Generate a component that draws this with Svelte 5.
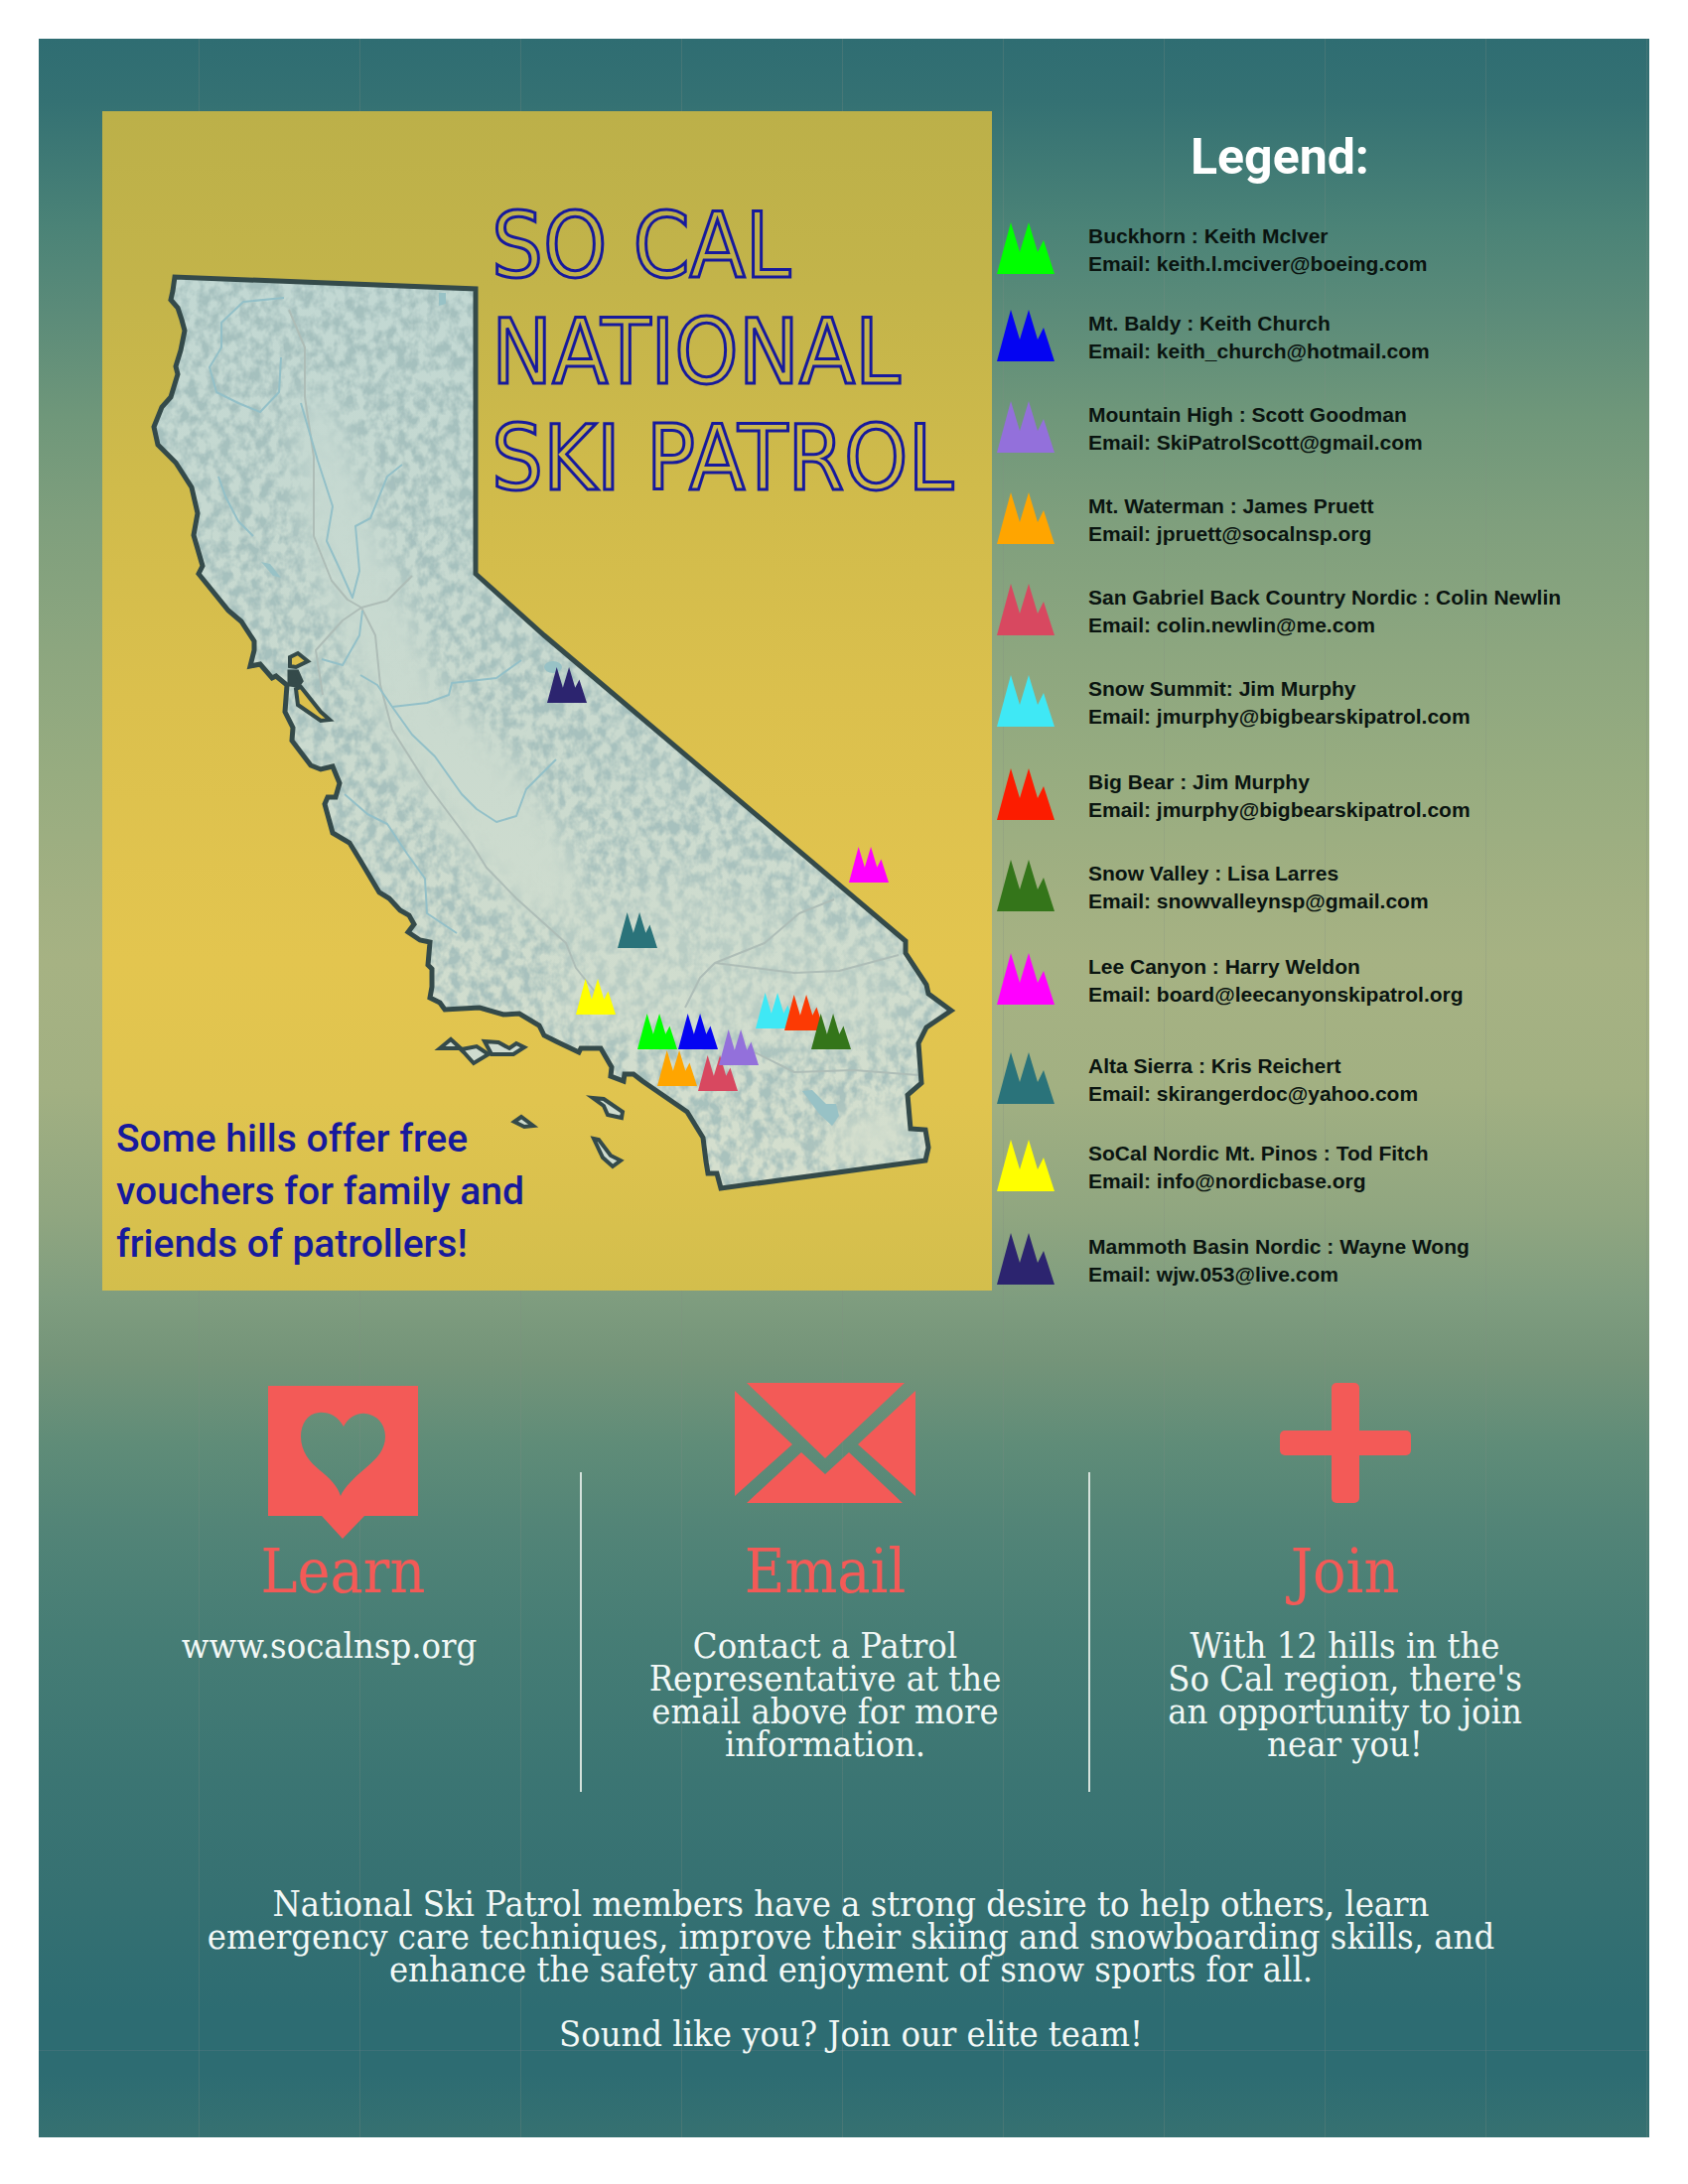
<script>
  const peak = 'M0 52 L14 0 L23 30 L32 0 L41 30 L47 18 L58 52 Z';

  const hills = [
    { name: 'Buckhorn : Keith McIver', email: 'keith.l.mciver@boeing.com', color: '#00ff00' },
    { name: 'Mt. Baldy : Keith Church', email: 'keith_church@hotmail.com', color: '#0404f2' },
    { name: 'Mountain High : Scott Goodman', email: 'SkiPatrolScott@gmail.com', color: '#9370db' },
    { name: 'Mt. Waterman : James Pruett', email: 'jpruett@socalnsp.org', color: '#ffa500' },
    { name: 'San Gabriel Back Country Nordic : Colin Newlin', email: 'colin.newlin@me.com', color: '#d84860' },
    { name: 'Snow Summit: Jim Murphy', email: 'jmurphy@bigbearskipatrol.com', color: '#3fe8f5' },
    { name: 'Big Bear : Jim Murphy', email: 'jmurphy@bigbearskipatrol.com', color: '#fc1c00' },
    { name: 'Snow Valley : Lisa Larres', email: 'snowvalleynsp@gmail.com', color: '#34751a' },
    { name: 'Lee Canyon : Harry Weldon', email: 'board@leecanyonskipatrol.org', color: '#ff00ff' },
    { name: 'Alta Sierra : Kris Reichert', email: 'skirangerdoc@yahoo.com', color: '#2a737a' },
    { name: 'SoCal Nordic Mt. Pinos : Tod Fitch', email: 'info@nordicbase.org', color: '#ffff00' },
    { name: 'Mammoth Basin Nordic : Wayne Wong', email: 'wjw.053@live.com', color: '#2c246f' }
  ];

  // Marker positions on the map: left edge and base line of each peak.
  const markers = [
    { x: 551, y: 708, color: '#2c246f' },
    { x: 855, y: 889, color: '#ff00ff' },
    { x: 622, y: 955, color: '#2a737a' },
    { x: 580, y: 1022, color: '#ffff00' },
    { x: 642, y: 1057, color: '#00ff00' },
    { x: 683, y: 1057, color: '#0404f2' },
    { x: 662, y: 1094, color: '#ffa500' },
    { x: 703, y: 1099, color: '#d84860' },
    { x: 724, y: 1073, color: '#9370db' },
    { x: 761, y: 1036, color: '#3fe8f5' },
    { x: 790, y: 1038, color: '#fc3a04' },
    { x: 817, y: 1057, color: '#34751a' }
  ];

  const state =
    'M176 279 L174 293 L172 302 L179 310 L183 322 L186 333 L182 353 L177 369 L179 377 L172 400 L163 410 L155 430 L159 448 L177 466 L193 491 L199 517 L195 539 L204 570 L200 578 L230 615 L243 626 L256 646 L256 655 L252 671 L262 669 L274 683 L278 681 L289 690 L287 717 L295 733 L294 746 L313 771 L323 775 L335 772 L342 789 L338 803 L330 803 L327 810 L335 839 L352 849 L363 867 L382 899 L392 905 L403 917 L412 922 L417 931 L411 939 L423 947 L433 949 L431 972 L435 976 L435 994 L433 1005 L443 1010 L448 1017 L483 1015 L507 1022 L523 1021 L543 1033 L548 1043 L560 1049 L583 1060 L585 1056 L605 1056 L616 1075 L615 1084 L628 1089 L629 1082 L638 1082 L647 1089 L692 1120 L708 1146 L711 1170 L713 1182 L722 1182 L726 1197 L932 1169 L935 1156 L932 1138 L917 1137 L914 1103 L928 1091 L925 1051 L933 1035 L958 1018 L935 1001 L933 992 L912 960 L912 948 L548 640 L479 578 L479 291 Z';

  const islands = [
    'M443 1056 L454 1047 L465 1057 L480 1054 L492 1062 L477 1071 L467 1060 L463 1056 Z',
    'M488 1049 L502 1050 L513 1056 L520 1051 L528 1055 L517 1062 L495 1062 Z',
    'M597 1106 L608 1107 L627 1120 L626 1126 L612 1123 L608 1114 Z',
    'M518 1130 L525 1125 L537 1134 L528 1135 Z',
    'M598 1147 L603 1148 L615 1164 L625 1169 L617 1175 L607 1166 Z'
  ];
</script>

<main class="poster">
  <div class="top">
    <section class="panel">
      <svg class="map" viewBox="103 112 896 1188" role="img" aria-label="Map of California with ski hills">
        <defs>
          <linearGradient id="land" x1="0" y1="0" x2="0" y2="1">
            <stop offset="0" stop-color="#c2d8d3" />
            <stop offset="0.5" stop-color="#cadacf" />
            <stop offset="1" stop-color="#d5dfce" />
          </linearGradient>
          <filter id="relief" x="0" y="0" width="1" height="1" color-interpolation-filters="sRGB">
            <feTurbulence type="fractalNoise" baseFrequency="0.095 0.075" numOctaves="3" seed="8" />
            <feColorMatrix values="0 0 0 0 0.62  0 0 0 0 0.73  0 0 0 0 0.725  3 0 0 0 -1.1" />
          </filter>
          <filter id="soft"><feGaussianBlur stdDeviation="14" /></filter>
          <clipPath id="inside"><path d={state} /></clipPath>
          <mask id="hilly" maskUnits="userSpaceOnUse" x="103" y="112" width="896" height="1188">
            <rect x="103" y="112" width="896" height="1188" fill="#ccc" />
            <g filter="url(#soft)">
              <path d="M298 400 L330 400 L390 560 L440 690 L520 770 L575 860 L590 920 L540 930 L470 860 L400 760 L345 640 L305 520 Z" fill="#000" />
              <path d="M600 940 L690 930 L700 960 L650 1000 L590 990 Z" fill="#000" />
              <path d="M850 1130 L905 1110 L915 1160 L830 1168 Z" fill="#000" />
              <path d="M560 920 L700 880 L900 960 L900 1060 L560 1040 Z" fill="#777" />
            </g>
          </mask>
        </defs>

        <path d={state} fill="url(#land)" />
        <g clip-path="url(#inside)">
          <g mask="url(#hilly)">
            <rect x="103" y="260" width="896" height="960" filter="url(#relief)" />
          </g>
          <g class="road">
            <path d="M291 312 L307 350 L307 400 L316 460 L316 540 L334 585 L350 604 L364 612 L378 640 L383 690 L395 735 L430 790 L475 850 L490 874 L520 905 L570 950 L580 975 L600 1000" />
            <path d="M364 612 L345 625 L318 655 L325 700 M364 612 L390 605 L415 580" />
            <path d="M690 1015 L705 985 L720 970 L770 950 L805 920 L840 906 M720 970 L800 980 L845 978 L905 962 M760 1060 L800 1080 L860 1078 L925 1083" />
          </g>
          <g class="river">
            <path d="M286 300 L245 304 L223 325 L223 350 L211 370 L218 395 L240 406 L262 415 L281 395 L283 360" />
            <path d="M303 406 L320 464 L335 510 L329 545 L343 575 L355 602 L362 575 L358 530 L373 522 L390 480 L405 468" />
            <path d="M220 480 L227 500 L240 525 L255 540" />
            <path d="M324 664 L345 670 L362 640 L365 615 M363 680 L380 690 L395 712 L415 740 L438 762 L465 800 L480 815 L500 828 L520 822 L530 795 L545 780 L560 765" />
            <path d="M395 712 L430 708 L452 700 L455 688 L500 683 L525 665" />
            <path d="M347 800 L370 820 L390 830 L410 860 L428 885 L430 920 L460 940" />
          </g>
          <path class="lake" d="M808 1099 L818 1098 L832 1112 L842 1112 L845 1124 L838 1134 L825 1122 Z" />
          <ellipse class="lake" cx="557" cy="672" rx="9" ry="6" />
          <path class="lake" d="M442 295 L449 295 L449 306 L442 308 Z M263 566 L272 568 L283 582 L275 580 Z" />
        </g>
        <path class="border" d={state} />
        <path class="bay" d="M292 662 L300 658 L310 666 L298 672 L292 671 Z" />
        <path class="bay" d="M298 694 L303 692 L323 717 L332 725 L323 726 L300 710 Z" />
        <path class="strait" d="M292 677 L299 677 L303 686 L300 690 L292 689 Z" />
        {#each islands as island}
          <path class="island" d={island} />
        {/each}
        {#each markers as m}
          <path d={peak} fill={m.color} transform="translate({m.x} {m.y - 36}) scale(0.69)" />
        {/each}
      </svg>
      <h1>SO CAL<br />NATIONAL<br />SKI PATROL</h1>
      <p class="slogan">Some hills offer free<br />vouchers for family and<br />friends of patrollers!</p>
    </section>

    <section class="legend">
      <h2>Legend:</h2>
      <ul>
        {#each hills as hill}
          <li>
            <svg class="peak" viewBox="0 0 58 52" aria-hidden="true"><path d={peak} fill={hill.color} /></svg>
            <p>{hill.name}<br />Email: <a href="mailto:{hill.email}">{hill.email}</a></p>
          </li>
        {/each}
      </ul>
    </section>
  </div>

  <section class="actions">
    <article class="learn">
      <svg width="151" height="154" viewBox="0 0 151 154" aria-hidden="true">
        <path fill-rule="evenodd" d="M0 0 H151 V131 H97 L75 154 L54 131 H0 Z M76 41 C70 30 60 26 51 27 C40 28 33 38 33 51 C33 66 42 77 52 85 C62 93 70 101 73 111 C77 102 86 93 98 83 C110 73 118 64 118 51 C118 38 109 29 98 28 C89 27 81 32 76 41 Z" />
      </svg>
      <h3>Learn</h3>
      <p><a href="http://www.socalnsp.org">www.socalnsp.org</a></p>
    </article>
    <div class="rule"></div>
    <article class="email">
      <svg width="182" height="121" viewBox="0 0 182 121" aria-hidden="true">
        <path d="M12 0 H171 L91 76 Z M0 8 L58 62 L0 114 Z M182 8 L124 62 L182 114 Z M12 121 L67 70 L91 92 L115 70 L169 121 Z" />
      </svg>
      <h3>Email</h3>
      <p>Contact a Patrol<br />Representative at the<br />email above for more<br />information.</p>
    </article>
    <div class="rule"></div>
    <article class="join">
      <svg width="132" height="121" viewBox="0 0 132 121" aria-hidden="true">
        <rect x="52" y="0" width="28" height="121" rx="5" />
        <rect x="0" y="48" width="132" height="25" rx="5" />
      </svg>
      <h3>Join</h3>
      <p>With 12 hills in the<br />So Cal region, there's<br />an opportunity to join<br />near you!</p>
    </article>
  </section>

  <footer>
    <p>National Ski Patrol members have a strong desire to help others, learn<br />emergency care techniques, improve their skiing and snowboarding skills, and<br />enhance the safety and enjoyment of snow sports for all.</p>
    <p>Sound like you? Join our elite team!</p>
  </footer>
</main>

<style>
  :global(body) {
    margin: 0;
    background: #fff;
  }

  h1, h2, h3, p, ul {
    margin: 0;
    padding: 0;
    font-weight: 400;
  }

  a {
    color: inherit;
    text-decoration: none;
  }

  .poster {
    box-sizing: border-box;
    margin: 39px;
    padding: 73px 54px 88px 64px;
    background:
      linear-gradient(rgba(90, 120, 130, 0.4), rgba(90, 120, 130, 0.4)) 0 calc(100% - 87px) / 100% 1px no-repeat,
      repeating-linear-gradient(90deg, transparent 0 161px, rgba(130, 140, 130, 0.25) 161px 162px),
      linear-gradient(#2f6d72 0, #347173 3%, #4b8377 9%, #5b8b79 13%, #6f977a 18%, #7f9f7d 23%, #8ca67f 29%, #97ac80 35%, #a2b082 41%, #a6b283 44%, #a2b082 50%, #90a680 56%, #7f9d7f 60%, #749479 63%, #5f8c78 67%, #528477 71%, #467d75 76%, #3b7573 83%, #367172 88%, #2d6c72 94%, #2d6c72 97%, #367171 100%);
  }

  .top {
    display: grid;
    grid-template-columns: minmax(0, 896fr) minmax(0, 608fr);
    align-items: start;
  }

  .panel {
    position: relative;
    display: flex;
    flex-direction: column;
    justify-content: space-between;
    box-sizing: border-box;
    aspect-ratio: 896 / 1188;
    padding: 82px 14px 20px;
    color: #171a9c;
    background: linear-gradient(#bcb049 0, #c3b44a 15%, #d0bb4b 32%, #dbc04d 50%, #e3c54f 72%, #e0c44f 84%, #d3be4c 100%);
  }

  .map {
    position: absolute;
    inset: 0;
    width: 100%;
    height: 100%;
  }

  .border, .island, .bay, .strait {
    stroke: #344a4a;
    stroke-width: 5;
    stroke-linejoin: miter;
    fill: none;
  }

  .island {
    fill: #cfdccf;
    stroke-width: 4;
  }

  .bay {
    fill: #dcc04c;
    stroke-width: 4;
  }

  .strait {
    fill: #344a4a;
  }

  .river, .road {
    fill: none;
    stroke: #93c0c8;
    stroke-width: 2;
    stroke-linejoin: round;
  }

  .road {
    stroke: #aebdb7;
  }

  .lake {
    fill: #98c2c6;
  }

  h1 {
    position: relative;
    padding-left: 378px;
    font: 400 91px/107px 'DejaVu Sans Condensed', 'DejaVu Sans', sans-serif;
    color: transparent;
    -webkit-text-stroke: 3px #171a9c;
    white-space: nowrap;
  }

  .slogan {
    position: relative;
    font: 500 39px/53px Roboto, sans-serif;
  }

  .legend h2 {
    padding: 16px 28px 0 0;
    font: 700 50px/60px Roboto, sans-serif;
    color: #fff;
    text-align: center;
  }

  .legend ul {
    display: grid;
    grid-template-rows: 88px repeat(4, 92px) 94px 92px 94px 100px 88px 94px 56px;
    padding-top: 33px;
    list-style: none;
  }

  .legend li {
    display: grid;
    grid-template-columns: 58px 1fr;
    column-gap: 34px;
    align-items: start;
    padding-left: 5px;
  }

  .peak {
    width: 58px;
    height: 52px;
    padding-top: 3px;
  }

  .legend p {
    padding-top: 3px;
    font: 700 21px/28px 'Liberation Sans', sans-serif;
    color: #0a1410;
    white-space: nowrap;
  }

  .actions {
    display: grid;
    grid-template-columns: minmax(0, 481fr) 2px minmax(0, 510fr) 2px minmax(0, 509fr);
    padding-top: 93px;
  }

  article {
    display: grid;
    grid-template-rows: 158px 64px auto;
    justify-items: center;
    align-items: start;
    text-align: center;
  }

  article svg {
    fill: #f35a57;
  }

  .learn svg {
    padding-top: 3px;
  }

  .learn, .join {
    padding-left: 4px;
  }

  .email {
    padding-right: 20px;
  }

  h3 {
    font: 400 62px/64px 'DejaVu Serif Condensed', 'DejaVu Serif', serif;
    color: #f35a57;
  }

  article p {
    padding-top: 26px;
    font: 400 36px/33px 'DejaVu Serif Condensed', 'DejaVu Serif', serif;
    color: #f2f8f6;
    white-space: nowrap;
  }

  .learn p {
    padding-right: 28px;
  }

  .rule {
    margin-top: 90px;
    height: 322px;
    background: #d5e2dc;
  }

  footer {
    display: grid;
    row-gap: 32px;
    padding: 96px 0 0 4px;
    font: 400 36px/33px 'DejaVu Serif Condensed', 'DejaVu Serif', serif;
    color: #f2f8f6;
    text-align: center;
  }
</style>
